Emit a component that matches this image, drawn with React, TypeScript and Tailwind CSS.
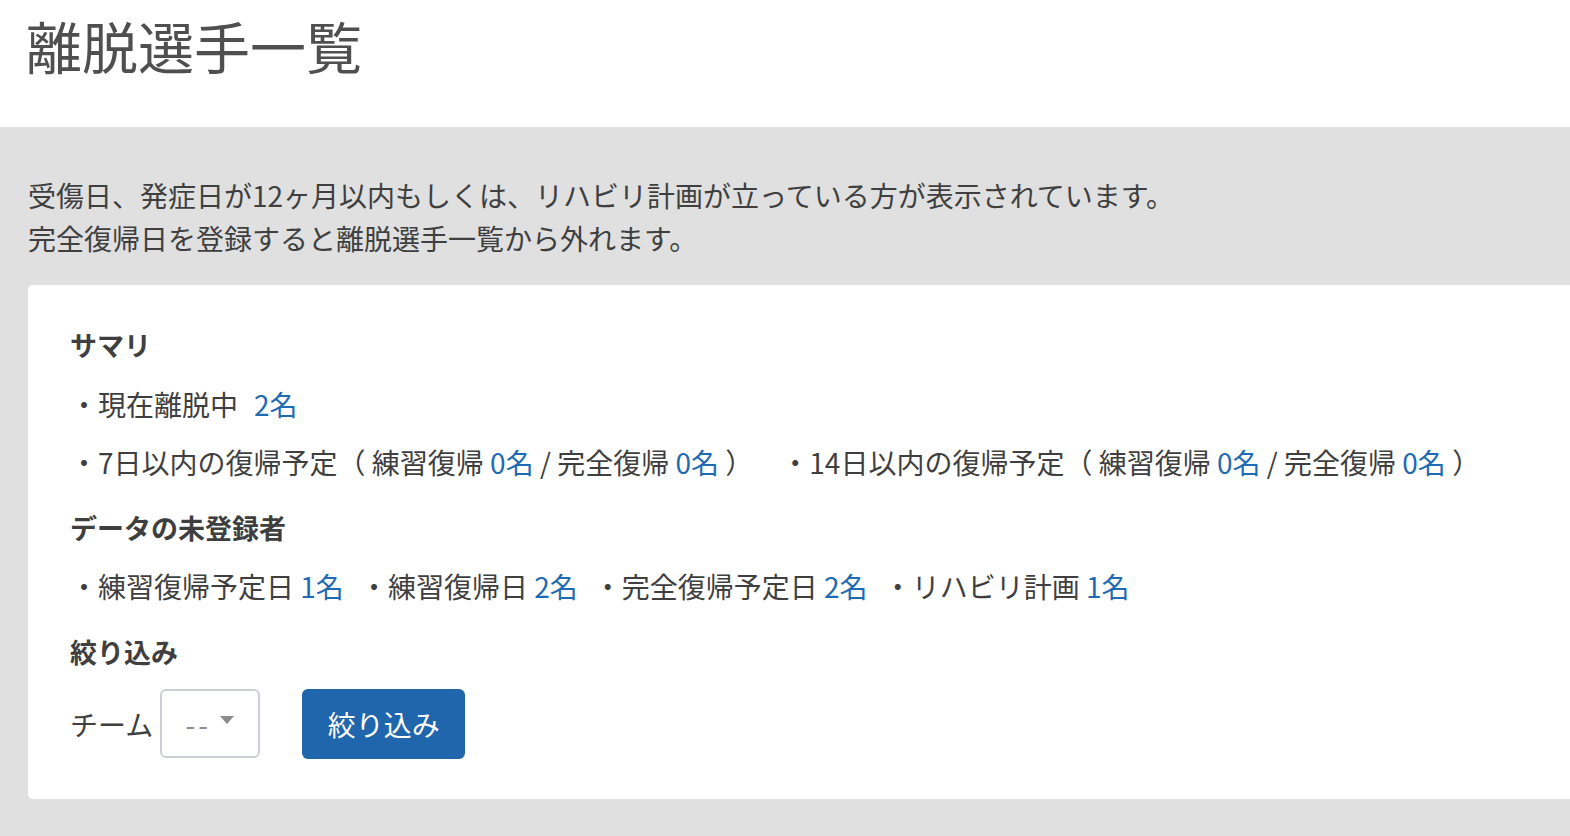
import { Fragment } from 'react';

const font = { fontFamily: '"Noto Sans CJK JP", "Noto Sans", sans-serif' };

function Count({ n }: { n: number }) {
  return <span className="text-[#1f6bb3]">{n}名</span>;
}

const unregistered = [
  { label: '練習復帰予定日', n: 1 },
  { label: '練習復帰日', n: 2 },
  { label: '完全復帰予定日', n: 2 },
  { label: 'リハビリ計画', n: 1 },
];

export default function App() {
  return (
    <div
      className="w-full h-[836px] overflow-hidden bg-[#e0e0e0] text-[#3f3f3f] text-[28px]"
      style={font}
    >
      <div className="h-[127px] bg-white pl-[26px] pt-[12px]">
        <h1 className="text-[56px] leading-[66px] text-[#4f4f4f] font-normal">離脱選手一覧</h1>
      </div>

      <div className="pl-[28px] pt-[47px]">
        <p className="leading-[43px]">
          受傷日、発症日が12ヶ月以内もしくは、リハビリ計画が立っている方が表示されています。
          <br />
          完全復帰日を登録すると離脱選手一覧から外れます。
        </p>

        <div className="mt-[25px] mr-[-40px] bg-white rounded-[5px] pl-[42px] pt-[40px] pb-[41px]">
          <h2 className="font-bold leading-[40px] text-[27px]">サマリ</h2>
          <div className="mt-[19px] leading-[40px] whitespace-nowrap">
            ・現在離脱中<span className="ml-[16px]"><Count n={2} /></span>
          </div>
          <div className="mt-[18px] leading-[40px] whitespace-nowrap flex">
            <span>
              ・7日以内の復帰予定（ 練習復帰 <Count n={0} /> / 完全復帰 <Count n={0} /> ）
            </span>
            <span className="ml-[28px]">
              ・14日以内の復帰予定（ 練習復帰 <Count n={0} /> / 完全復帰 <Count n={0} /> ）
            </span>
          </div>

          <h2 className="mt-[26px] font-bold leading-[40px] text-[27px]">データの未登録者</h2>
          <div className="mt-[18px] leading-[40px] whitespace-nowrap flex gap-[16px]">
            {unregistered.map((u) => (
              <Fragment key={u.label}>
                <span>
                  ・{u.label} <Count n={u.n} />
                </span>
              </Fragment>
            ))}
          </div>

          <h2 className="mt-[26px] font-bold leading-[40px] text-[27px]">絞り込み</h2>
          <div className="mt-[17px] flex items-center h-[69px]">
            <span className="mr-[7px]">チーム</span>
            <div className="w-[100px] h-[69px] border-2 border-[#ccd0d6] rounded-[6px] flex items-center justify-center gap-[8px] text-[#8c8c8c]">
              <span className="text-[28px] tracking-[3px]">--</span>
              <svg width="16" height="10" viewBox="0 0 16 10" className="mt-[-8px]">
                <path d="M1 1h14L8 9z" fill="#8c8c8c" />
              </svg>
            </div>
            <button className="ml-[42px] w-[163px] h-[70px] bg-[#1f66ad] text-white rounded-[6px] text-[28px]">
              絞り込み
            </button>
          </div>
        </div>
      </div>
    </div>
  );
}
